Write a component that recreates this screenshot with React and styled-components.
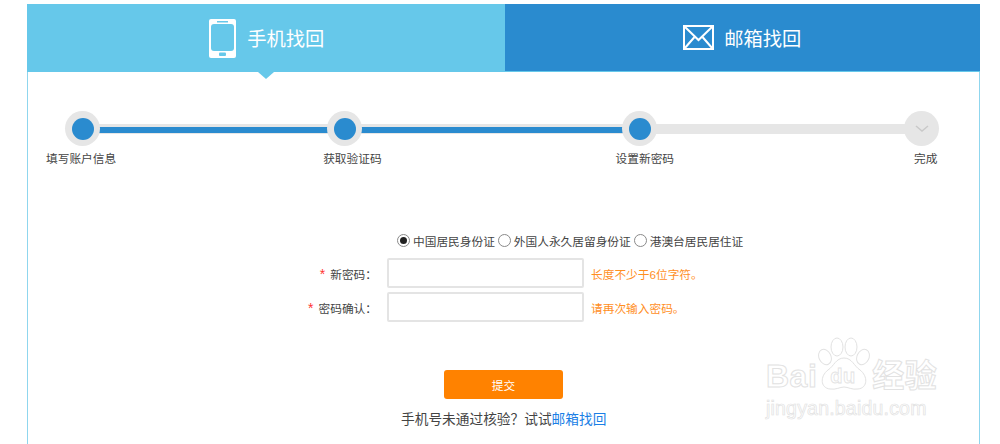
import React from 'react';
import styled, { createGlobalStyle } from 'styled-components';

const fontStack = '"Liberation Sans", "Noto Sans CJK SC", sans-serif';

const GlobalStyle = createGlobalStyle`
  html, body {
    margin: 0;
    background: #fff;
    font-family: ${fontStack};
    overflow: hidden;
  }
  * { box-sizing: border-box; }
`;

const Page = styled.div`
  position: relative;
  width: 1000px;
  height: 444px;
  padding: 4px 20px 0 27px;
  overflow: hidden;
`;

const Card = styled.div`
  width: 953px;
  height: 440px;
  display: flex;
  flex-direction: column;
`;

const Tabs = styled.div`
  display: flex;
  height: 68px;
  flex: none;
`;

const Tab = styled.div`
  position: relative;
  flex: 1;
  display: flex;
  align-items: center;
  justify-content: center;
  gap: ${(p) => (p.$active ? '11px' : '10px')};
  padding-left: ${(p) => (p.$active ? '2px' : '0')};
  background: ${(p) => (p.$active ? '#66c8ea' : '#2a8bcf')};
  border-bottom: ${(p) => (p.$active ? 'none' : '1px solid #66c8ea')};
  color: #fff;
  font-size: 19.3px;
  ${(p) => p.$active && `
    &::after {
      content: '';
      position: absolute;
      left: 50%;
      bottom: -7px;
      margin-left: -8px;
      border-left: 8px solid transparent;
      border-right: 8px solid transparent;
      border-top: 7px solid #66c8ea;
    }
  `}
`;

const Body = styled.div`
  flex: 1;
  border-left: 1px solid #8fd6ee;
  border-right: 1px solid #8fd6ee;
  padding-top: 39px;
`;

const Track = styled.div`
  display: flex;
  align-items: center;
  padding-left: 38px;
  height: 35px;
`;

const Dot = styled.div`
  position: relative;
  z-index: 1;
  width: 35px;
  height: 35px;
  flex: none;
  border-radius: 50%;
  background: #e6e6e6;
  display: flex;
  align-items: center;
  justify-content: center;
  margin: 0 -1px;

  &::before {
    content: '';
    display: ${(p) => (p.$done ? 'block' : 'none')};
    width: 22px;
    height: 22px;
    border-radius: 50%;
    background: #2a8bcf;
  }
`;

const Bar = styled.div`
  width: ${(p) => p.$width}px;
  height: 10px;
  flex: none;
  background: #e6e6e6;
  padding-top: 3px;

  &::before {
    content: '';
    display: ${(p) => (p.$done ? 'block' : 'none')};
    height: 6px;
    background: #2a8bcf;
  }
`;

const Labels = styled.div`
  display: flex;
  padding-left: 18px;
  margin-top: 6px;
  font-size: 11.7px;
  line-height: 14px;
  color: #444;
`;

const StepLabel = styled.span`
  margin-left: ${(p) => p.$offset || 0}px;
  white-space: nowrap;
`;

const Form = styled.div`
  margin-top: 67px;
  display: flex;
  flex-direction: column;
`;

const RadioRow = styled.div`
  display: flex;
  align-items: center;
  padding-left: 369px;
  height: 14px;
  font-size: 11.7px;
  color: #444;
`;

const RadioItem = styled.label`
  display: flex;
  align-items: center;
  gap: 3px;
  margin-right: 3px;
  white-space: nowrap;
`;

const RadioMark = styled.span`
  width: 13px;
  height: 13px;
  flex: none;
  border-radius: 50%;
  border: 1px solid #8a8a8a;
  background: #fff;
  display: flex;
  align-items: center;
  justify-content: center;

  &::before {
    content: '';
    display: ${(p) => (p.$checked ? 'block' : 'none')};
    width: 7px;
    height: 7px;
    border-radius: 50%;
    background: #222;
  }
`;

const Field = styled.div`
  display: flex;
  align-items: center;
  height: 30px;
  margin-top: ${(p) => p.$top}px;
`;

const FieldLabel = styled.div`
  width: 359px;
  padding-right: 10px;
  text-align: right;
  font-size: 11.7px;
  color: #444;
  white-space: nowrap;
`;

const Star = styled.span`
  color: #f33;
  font-size: 14px;
  margin-right: 5px;
`;

const Input = styled.input`
  width: 197px;
  height: 30px;
  flex: none;
  border: 2px solid #e4e4e4;
  border-radius: 2px;
  background: #fff;
  outline: none;
`;

const Hint = styled.span`
  margin-left: 7px;
  font-size: 11.7px;
  color: #ff8f1f;
  white-space: nowrap;
`;

const Submit = styled.button`
  display: block;
  width: 119px;
  height: 29px;
  margin: 48px 0 0 416px;
  border: none;
  border-radius: 3px;
  background: #ff8200;
  color: #fff;
  font-family: ${fontStack};
  font-size: 11.7px;
`;

const Footer = styled.div`
  margin: 11px 0 0 373px;
  font-size: 13.7px;
  line-height: 20px;
  color: #444;
  white-space: nowrap;
`;

const MailLink = styled.a`
  color: #1a7fe6;
  text-decoration: none;
`;

const Watermark = styled.div`
  position: absolute;
  left: 766px;
  top: 336px;
  width: 180px;
  height: 90px;
  color: #fff;
  -webkit-text-stroke: 1px #e2e2e2;
  font-family: ${fontStack};
`;

const MarkLogo = styled.div`
  display: flex;
  align-items: flex-end;
  height: 58px;
  font-size: 32px;
  line-height: 36px;
  font-weight: 700;
  letter-spacing: 0.5px;
`;

const MarkUrl = styled.div`
  margin-top: 2px;
  font-size: 19.5px;
  line-height: 24px;
  letter-spacing: 0.2px;
  -webkit-text-stroke: 0.7px #e2e2e2;
`;

const PawBox = styled.div`
  position: relative;
  width: 52px;
  height: 58px;
  flex: none;
  margin: 0 2px 0 1px;
`;

const PawText = styled.span`
  position: absolute;
  left: 12px;
  bottom: 7px;
  font-size: 20px;
  line-height: 22px;
  -webkit-text-stroke: 0.8px #e2e2e2;
`;

const PhoneIcon = () => (
  <svg width="27" height="39" viewBox="0 0 27 39">
    <rect width="27" height="39" rx="2" fill="#fff" />
    <rect x="2" y="5" width="23" height="27" rx="3" fill="#66c8ea" />
    <rect x="8" y="2" width="11" height="1.5" fill="#66c8ea" />
    <rect x="10" y="33.500" width="7" height="3.500" rx="1" fill="#66c8ea" />
  </svg>
);

const MailIcon = () => (
  <svg width="31" height="25" viewBox="0 0 31 25" fill="none" stroke="#fff">
    <rect x="1" y="1" width="29" height="23" strokeWidth="2" />
    <path d="M1.500 1.500 L15.500 15 L29.500 1.500" strokeWidth="2" />
    <path d="M1.500 23.500 L11.500 12 M29.500 23.500 L19.500 12" strokeWidth="2" />
  </svg>
);

const CheckIcon = () => (
  <svg width="14" height="9" viewBox="0 0 14 9" fill="none">
    <path d="M1 2 L7 7 L13 2" stroke="#c9c9c9" strokeWidth="1.500" />
  </svg>
);

const Paw = () => (
  <svg width="52" height="58" viewBox="0 0 52 58" fill="#fff" stroke="#e2e2e2" strokeWidth="1">
    <ellipse cx="19" cy="11" rx="6" ry="9" />
    <ellipse cx="33" cy="11" rx="6" ry="9" />
    <ellipse cx="7" cy="21" rx="6" ry="8" transform="rotate(-25 7 21)" />
    <ellipse cx="45" cy="21" rx="6" ry="8" transform="rotate(25 45 21)" />
    <path d="M26 22 C34 22 36 30 42 34 C50 40 50 52 40 53 C34 54 30 51 26 51 C22 51 18 54 12 53 C2 52 2 40 10 34 C16 30 18 22 26 22 Z" />
  </svg>
);

const App = () => (
  <Page>
    <GlobalStyle />
    <Card>
      <Tabs>
        <Tab $active>
          <PhoneIcon />
          手机找回
        </Tab>
        <Tab>
          <MailIcon />
          邮箱找回
        </Tab>
      </Tabs>
      <Body>
        <Track>
          <Dot $done />
          <Bar $width={229} $done />
          <Dot $done />
          <Bar $width={262} $done />
          <Dot $done />
          <Bar $width={249} />
          <Dot>
            <CheckIcon />
          </Dot>
        </Track>
        <Labels>
          <StepLabel>填写账户信息</StepLabel>
          <StepLabel $offset={207}>获取验证码</StepLabel>
          <StepLabel $offset={234}>设置新密码</StepLabel>
          <StepLabel $offset={240}>完成</StepLabel>
        </Labels>
        <Form>
          <RadioRow>
            <RadioItem>
              <RadioMark $checked />
              中国居民身份证
            </RadioItem>
            <RadioItem>
              <RadioMark />
              外国人永久居留身份证
            </RadioItem>
            <RadioItem>
              <RadioMark />
              港澳台居民居住证
            </RadioItem>
          </RadioRow>
          <Field $top={11}>
            <FieldLabel>
              <Star>*</Star>新密码：
            </FieldLabel>
            <Input />
            <Hint>长度不少于6位字符。</Hint>
          </Field>
          <Field $top={4}>
            <FieldLabel>
              <Star>*</Star>密码确认：
            </FieldLabel>
            <Input />
            <Hint>请再次输入密码。</Hint>
          </Field>
        </Form>
        <Submit>提交</Submit>
        <Footer>
          手机号未通过核验？试试<MailLink>邮箱找回</MailLink>
        </Footer>
      </Body>
    </Card>
    <Watermark>
      <MarkLogo>
        Bai
        <PawBox>
          <Paw />
          <PawText>du</PawText>
        </PawBox>
        经验
      </MarkLogo>
      <MarkUrl>jingyan.baidu.com</MarkUrl>
    </Watermark>
  </Page>
);

export default App;
